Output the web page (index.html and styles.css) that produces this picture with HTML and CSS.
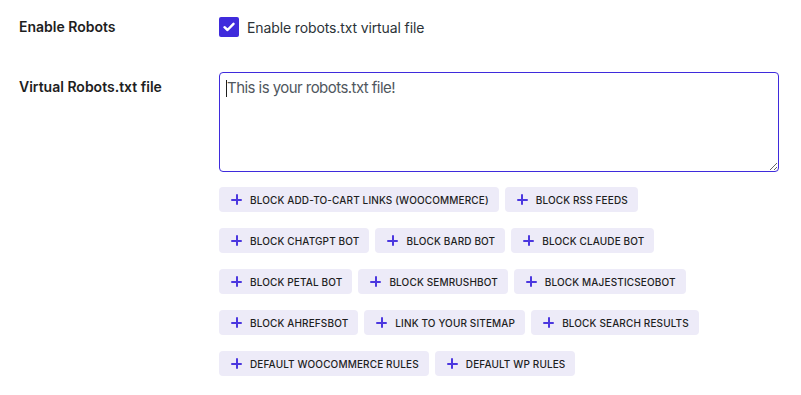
FILE: index.html
```html
<!DOCTYPE html>
<html>
<head>
<meta charset="utf-8">
<link rel="stylesheet" href="styles.css">
</head>
<body>
<div class="form">
  <div class="row">
    <div class="label label-check">Enable Robots</div>
    <div class="field">
      <label class="check">
        <span class="box"><svg width="12" height="10" viewBox="0 0 12 10"><path d="M1.5 5.2 L4.5 8 L10.5 1.8" fill="none" stroke="#fff" stroke-width="2.4" stroke-linecap="round" stroke-linejoin="round"/></svg></span>
        <span class="check-text">Enable robots.txt virtual file</span>
      </label>
    </div>
  </div>
  <div class="row">
    <div class="label label-area">Virtual Robots.txt file</div>
    <div class="field">
      <div class="area-wrap">
        <textarea class="area" placeholder="This is your robots.txt file!"></textarea>
        <span class="caret"></span>
      </div>
      <div class="buttons">
        <div class="btn-row">
          <button class="btn"><span class="plus"></span>Block add-to-cart links (WooCommerce)</button>
          <button class="btn"><span class="plus"></span>Block RSS feeds</button>
        </div>
        <div class="btn-row">
          <button class="btn"><span class="plus"></span>Block ChatGPT bot</button>
          <button class="btn"><span class="plus"></span>Block Bard bot</button>
          <button class="btn"><span class="plus"></span>Block Claude bot</button>
        </div>
        <div class="btn-row">
          <button class="btn"><span class="plus"></span>Block Petal bot</button>
          <button class="btn"><span class="plus"></span>Block SemrushBot</button>
          <button class="btn"><span class="plus"></span>Block MajesticSEObot</button>
        </div>
        <div class="btn-row">
          <button class="btn"><span class="plus"></span>Block AhrefsBot</button>
          <button class="btn"><span class="plus"></span>Link to your sitemap</button>
          <button class="btn"><span class="plus"></span>Block search results</button>
        </div>
        <div class="btn-row">
          <button class="btn"><span class="plus"></span>Default WooCommerce rules</button>
          <button class="btn"><span class="plus"></span>Default WP rules</button>
        </div>
      </div>
    </div>
  </div>
</div>
</body>
</html>
```
FILE: styles.css
```css
html, body {
  margin: 0;
  padding: 0;
  background: #ffffff;
}
body {
  font-family: Inter, "Noto Sans", sans-serif;
  color: #1e1e1e;
}
.form {
  padding: 17px 0 0 19px;
  display: flex;
  flex-direction: column;
  gap: 35px;
}
.row {
  display: grid;
  grid-template-columns: 200px 560px;
}
.label {
  font-size: 14px;
  font-weight: 600;
  color: #1e1e1e;
}
.label-check {
  line-height: 20px;
}
.label-area {
  padding-top: 5px;
  line-height: 20px;
}
.check {
  display: flex;
  align-items: center;
  gap: 8px;
  height: 20px;
}
.box {
  width: 20px;
  height: 20px;
  background: #3f2bdc;
  border-radius: 2px;
  display: flex;
  align-items: center;
  justify-content: center;
}
.check-text {
  font-size: 14px;
  letter-spacing: -0.12px;
  color: #2c3338;
}
.area-wrap {
  position: relative;
  height: 100px;
}
.area {
  box-sizing: border-box;
  width: 560px;
  height: 100px;
  border: 1px solid #3f2bdc;
  border-radius: 4px;
  padding: 4px 7px;
  font-family: Inter, "Noto Sans", sans-serif;
  font-size: 15px;
  letter-spacing: -0.55px;
  line-height: 22px;
  outline: none;
  resize: vertical;
  display: block;
  margin: 0;
}
.area::placeholder {
  color: #50575e;
  opacity: 1;
}
.caret {
  position: absolute;
  left: 7px;
  top: 8px;
  width: 1px;
  height: 17px;
  background: #1e1e1e;
}
.buttons {
  margin-top: 15px;
  display: flex;
  flex-direction: column;
  gap: 16px;
}
.btn-row {
  display: flex;
  gap: 6px;
}
.btn {
  display: flex;
  align-items: center;
  gap: 8px;
  height: 25px;
  padding: 0 10px 0 12px;
  border: none;
  border-radius: 4px;
  background: #edebf8;
  font-family: Inter, "Noto Sans", sans-serif;
  font-size: 10px;
  font-weight: 500;
  letter-spacing: 0.13px;
  text-transform: uppercase;
  color: #1e1e1e;
  cursor: pointer;
}
.plus {
  position: relative;
  width: 11px;
  height: 11px;
  flex: none;
}
.plus::before, .plus::after {
  content: "";
  position: absolute;
  background: #4b37df;
  border-radius: 1px;
}
.plus::before {
  left: 0;
  top: 4.5px;
  width: 11px;
  height: 2px;
}
.plus::after {
  top: 0;
  left: 4.5px;
  width: 2px;
  height: 11px;
}
```
